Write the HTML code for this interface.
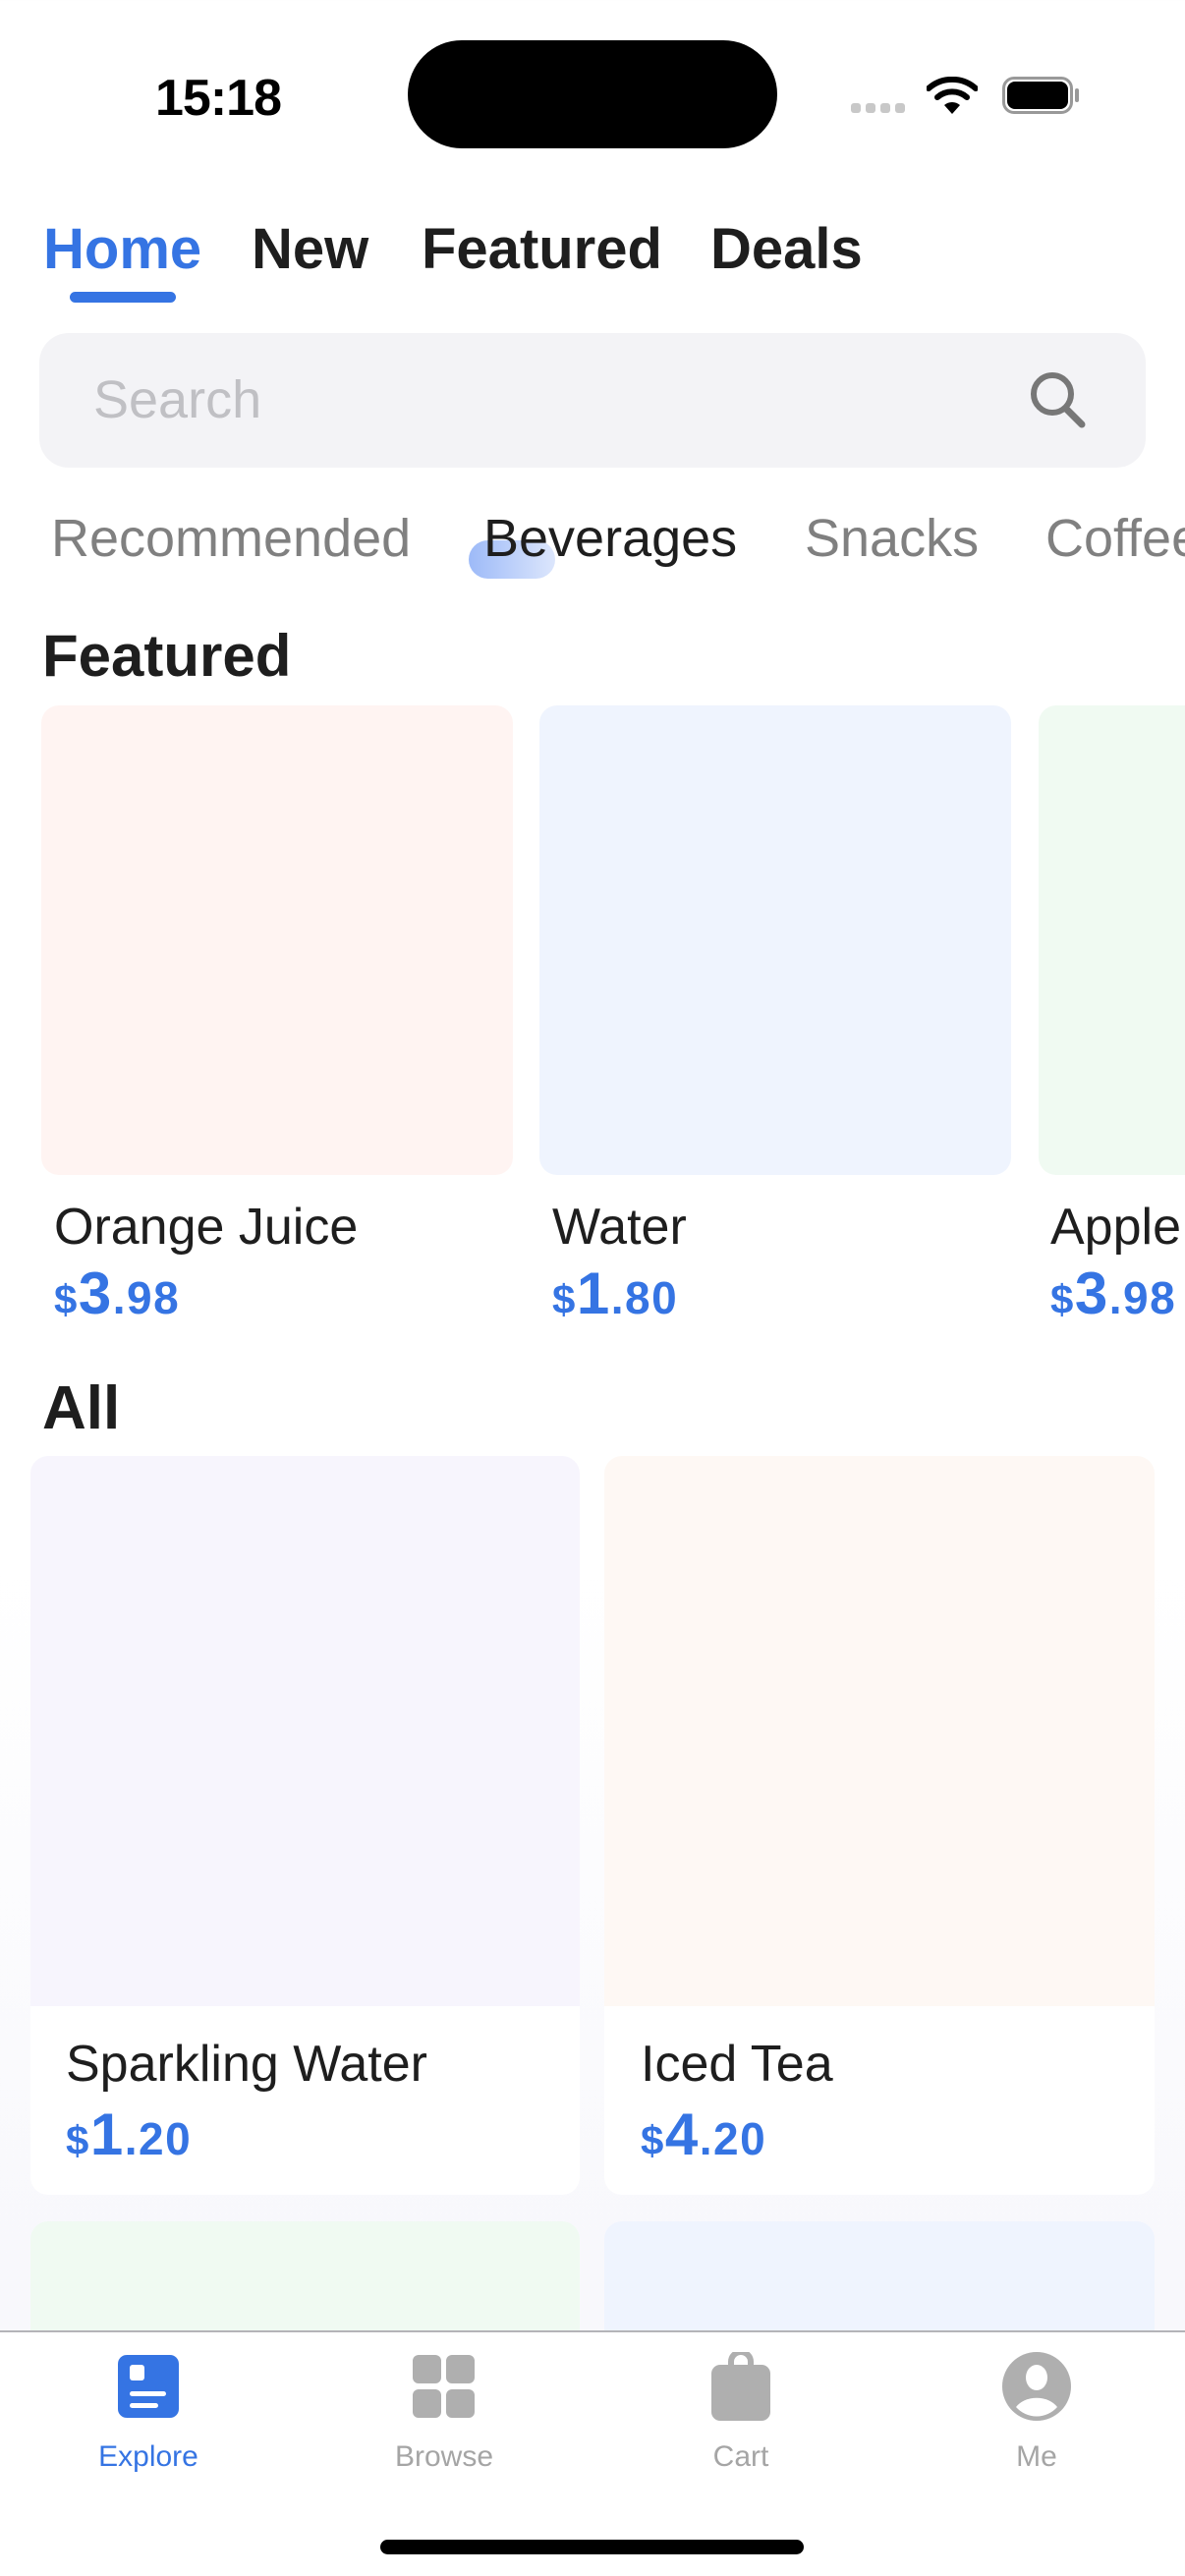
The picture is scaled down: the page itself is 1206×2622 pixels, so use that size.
<!DOCTYPE html>
<html><head><meta charset="utf-8"><style>
*{margin:0;padding:0;box-sizing:border-box}
body{width:1206px;height:2622px;overflow:hidden;position:relative;font-family:"Liberation Sans",sans-serif;background:linear-gradient(#fff 0,#fff 1600px,#f8f8fc 2300px,#f8f8fc 100%)}
.a{position:absolute;white-space:nowrap}
.card{position:absolute;border-radius:18px}
.nm{font-size:52px;color:#1e1e1e}
.pr{color:#3574e3;font-weight:bold;letter-spacing:1.5px}
.pr .s{font-size:42px}.pr .b{font-size:60px}.pr .c{font-size:46px}
.tl{font-size:30px;color:#a5a5a5;text-align:center;width:200px}
</style></head><body>
<div class="a" style="left:158px;top:70px;font-size:52px;font-weight:bold;color:#000;letter-spacing:-1px">15:18</div>
<div class="a" style="left:415px;top:41px;width:376px;height:110px;background:#000;border-radius:55px"></div>
<div class="a" style="left:866px;top:105px;display:flex;gap:5px"><i style="width:10px;height:10px;background:#c8c8c8;border-radius:3px"></i><i style="width:10px;height:10px;background:#c8c8c8;border-radius:3px"></i><i style="width:10px;height:10px;background:#c8c8c8;border-radius:3px"></i><i style="width:10px;height:10px;background:#c8c8c8;border-radius:3px"></i></div>
<svg class="a" style="left:943px;top:78px" width="52" height="40" viewBox="0 0 52 40"><path d="M2 12 A36 36 0 0 1 50 12" stroke="#000" stroke-width="6" fill="none" stroke-linecap="round"/><path d="M11 21 A23 23 0 0 1 41 21" stroke="#000" stroke-width="6" fill="none" stroke-linecap="round"/><path d="M18 29 L26 38 L34 29 A12 12 0 0 0 18 29Z" fill="#000"/></svg>
<div class="a" style="left:1020px;top:78px;width:72px;height:38px;border:3px solid #999;border-radius:12px"></div>
<div class="a" style="left:1025px;top:83px;width:62px;height:28px;background:#000;border-radius:8px"></div>
<div class="a" style="left:1094px;top:90px;width:4px;height:14px;background:#999;border-radius:2px"></div>

<div class="a" style="left:44px;top:220px;font-size:58px;font-weight:bold;color:#3574e3">Home</div>
<div class="a" style="left:256px;top:220px;font-size:58px;font-weight:bold;color:#1e1e1e">New</div>
<div class="a" style="left:429px;top:220px;font-size:58px;font-weight:bold;color:#1e1e1e">Featured</div>
<div class="a" style="left:723px;top:220px;font-size:58px;font-weight:bold;color:#1e1e1e">Deals</div>
<div class="a" style="left:71px;top:297px;width:108px;height:11px;background:#3574e3;border-radius:6px"></div>

<div class="a" style="left:40px;top:339px;width:1126px;height:137px;background:#f3f3f6;border-radius:30px"></div>
<div class="a" style="left:95px;top:376px;font-size:54px;color:#c0c0c4">Search</div>
<svg class="a" style="left:1046px;top:376px" width="62" height="62" viewBox="0 0 62 62"><circle cx="25" cy="25" r="19" stroke="#777" stroke-width="6" fill="none"/><path d="M39 40 L55 56" stroke="#777" stroke-width="7" stroke-linecap="round"/></svg>

<div class="a" style="left:477px;top:550px;width:88px;height:39px;border-radius:20px;background:linear-gradient(90deg,#9dbaf8,#dce6fc)"></div>
<div class="a" style="left:52px;top:517px;font-size:54px;color:#808080">Recommended</div>
<div class="a" style="left:492px;top:517px;font-size:54px;color:#1e1e1e">Beverages</div>
<div class="a" style="left:819px;top:517px;font-size:54px;color:#808080">Snacks</div>
<div class="a" style="left:1064px;top:517px;font-size:54px;color:#808080">Coffee</div>

<div class="a" style="left:43px;top:633px;font-size:60px;font-weight:bold;color:#1e1e1e">Featured</div>
<div class="card" style="left:42px;top:718px;width:480px;height:478px;background:#fff4f2"></div>
<div class="card" style="left:549px;top:718px;width:480px;height:478px;background:#eff4fe"></div>
<div class="card" style="left:1057px;top:718px;width:480px;height:478px;background:#f0faf2"></div>
<div class="a nm" style="left:55px;top:1219px">Orange Juice</div>
<div class="a nm" style="left:562px;top:1219px">Water</div>
<div class="a nm" style="left:1069px;top:1219px">Apple</div>
<div class="a pr" style="left:55px;top:1282px"><span class="s">$</span><span class="b">3</span><span class="c">.98</span></div>
<div class="a pr" style="left:562px;top:1282px"><span class="s">$</span><span class="b">1</span><span class="c">.80</span></div>
<div class="a pr" style="left:1069px;top:1282px"><span class="s">$</span><span class="b">3</span><span class="c">.98</span></div>

<div class="a" style="left:43px;top:1398px;font-size:62px;font-weight:bold;color:#1e1e1e">All</div>
<div class="card" style="left:31px;top:1482px;width:559px;height:752px;background:#fff;overflow:hidden"><div style="height:560px;background:#f7f5fd"></div></div>
<div class="card" style="left:615px;top:1482px;width:560px;height:752px;background:#fff;overflow:hidden"><div style="height:560px;background:#fef8f4"></div></div>
<div class="a nm" style="left:67px;top:2071px">Sparkling Water</div>
<div class="a nm" style="left:652px;top:2071px">Iced Tea</div>
<div class="a pr" style="left:67px;top:2138px"><span class="s">$</span><span class="b">1</span><span class="c">.20</span></div>
<div class="a pr" style="left:652px;top:2138px"><span class="s">$</span><span class="b">4</span><span class="c">.20</span></div>
<div class="card" style="left:31px;top:2261px;width:559px;height:200px;background:#f0faf2"></div>
<div class="card" style="left:615px;top:2261px;width:560px;height:200px;background:#eff4fe"></div>

<div class="a" style="left:0;top:2372px;width:1206px;height:250px;background:#fff;border-top:2px solid #b4b4b8"></div>
<svg class="a" style="left:120px;top:2397px" width="62" height="64" viewBox="0 0 62 64"><rect x="0" y="0" width="62" height="64" rx="9" fill="#3574e3"/><rect x="12" y="10" width="15" height="16" rx="3" fill="#fff"/><rect x="12" y="37" width="37" height="5" rx="2.5" fill="#fff"/><rect x="12" y="49" width="29" height="5" rx="2.5" fill="#fff"/></svg>
<svg class="a" style="left:420px;top:2397px" width="64" height="64" viewBox="0 0 64 64"><rect x="0" y="0" width="29" height="29" rx="6" fill="#afafaf"/><rect x="34" y="0" width="29" height="29" rx="6" fill="#afafaf"/><rect x="0" y="35" width="29" height="29" rx="6" fill="#afafaf"/><rect x="34" y="35" width="29" height="29" rx="6" fill="#afafaf"/></svg>
<svg class="a" style="left:722px;top:2394px" width="64" height="70" viewBox="0 0 64 70"><path d="M22 16 V10 A10 10 0 0 1 42 10 V16" stroke="#afafaf" stroke-width="6" fill="none"/><rect x="2" y="13" width="60" height="57" rx="9" fill="#afafaf"/></svg>
<svg class="a" style="left:1020px;top:2394px" width="70" height="70" viewBox="0 0 70 70"><circle cx="35" cy="35" r="35" fill="#afafaf"/><ellipse cx="35" cy="26" rx="11" ry="13" fill="#fff"/><path d="M14 56 A24 18 0 0 1 56 56 A28 28 0 0 1 14 56Z" fill="#fff"/></svg>
<div class="a tl" style="left:51px;top:2484px;color:#3574e3">Explore</div>
<div class="a tl" style="left:352px;top:2484px">Browse</div>
<div class="a tl" style="left:654px;top:2484px">Cart</div>
<div class="a tl" style="left:955px;top:2484px">Me</div>
<div class="a" style="left:387px;top:2585px;width:431px;height:15px;background:#000;border-radius:8px"></div>
</body></html>
